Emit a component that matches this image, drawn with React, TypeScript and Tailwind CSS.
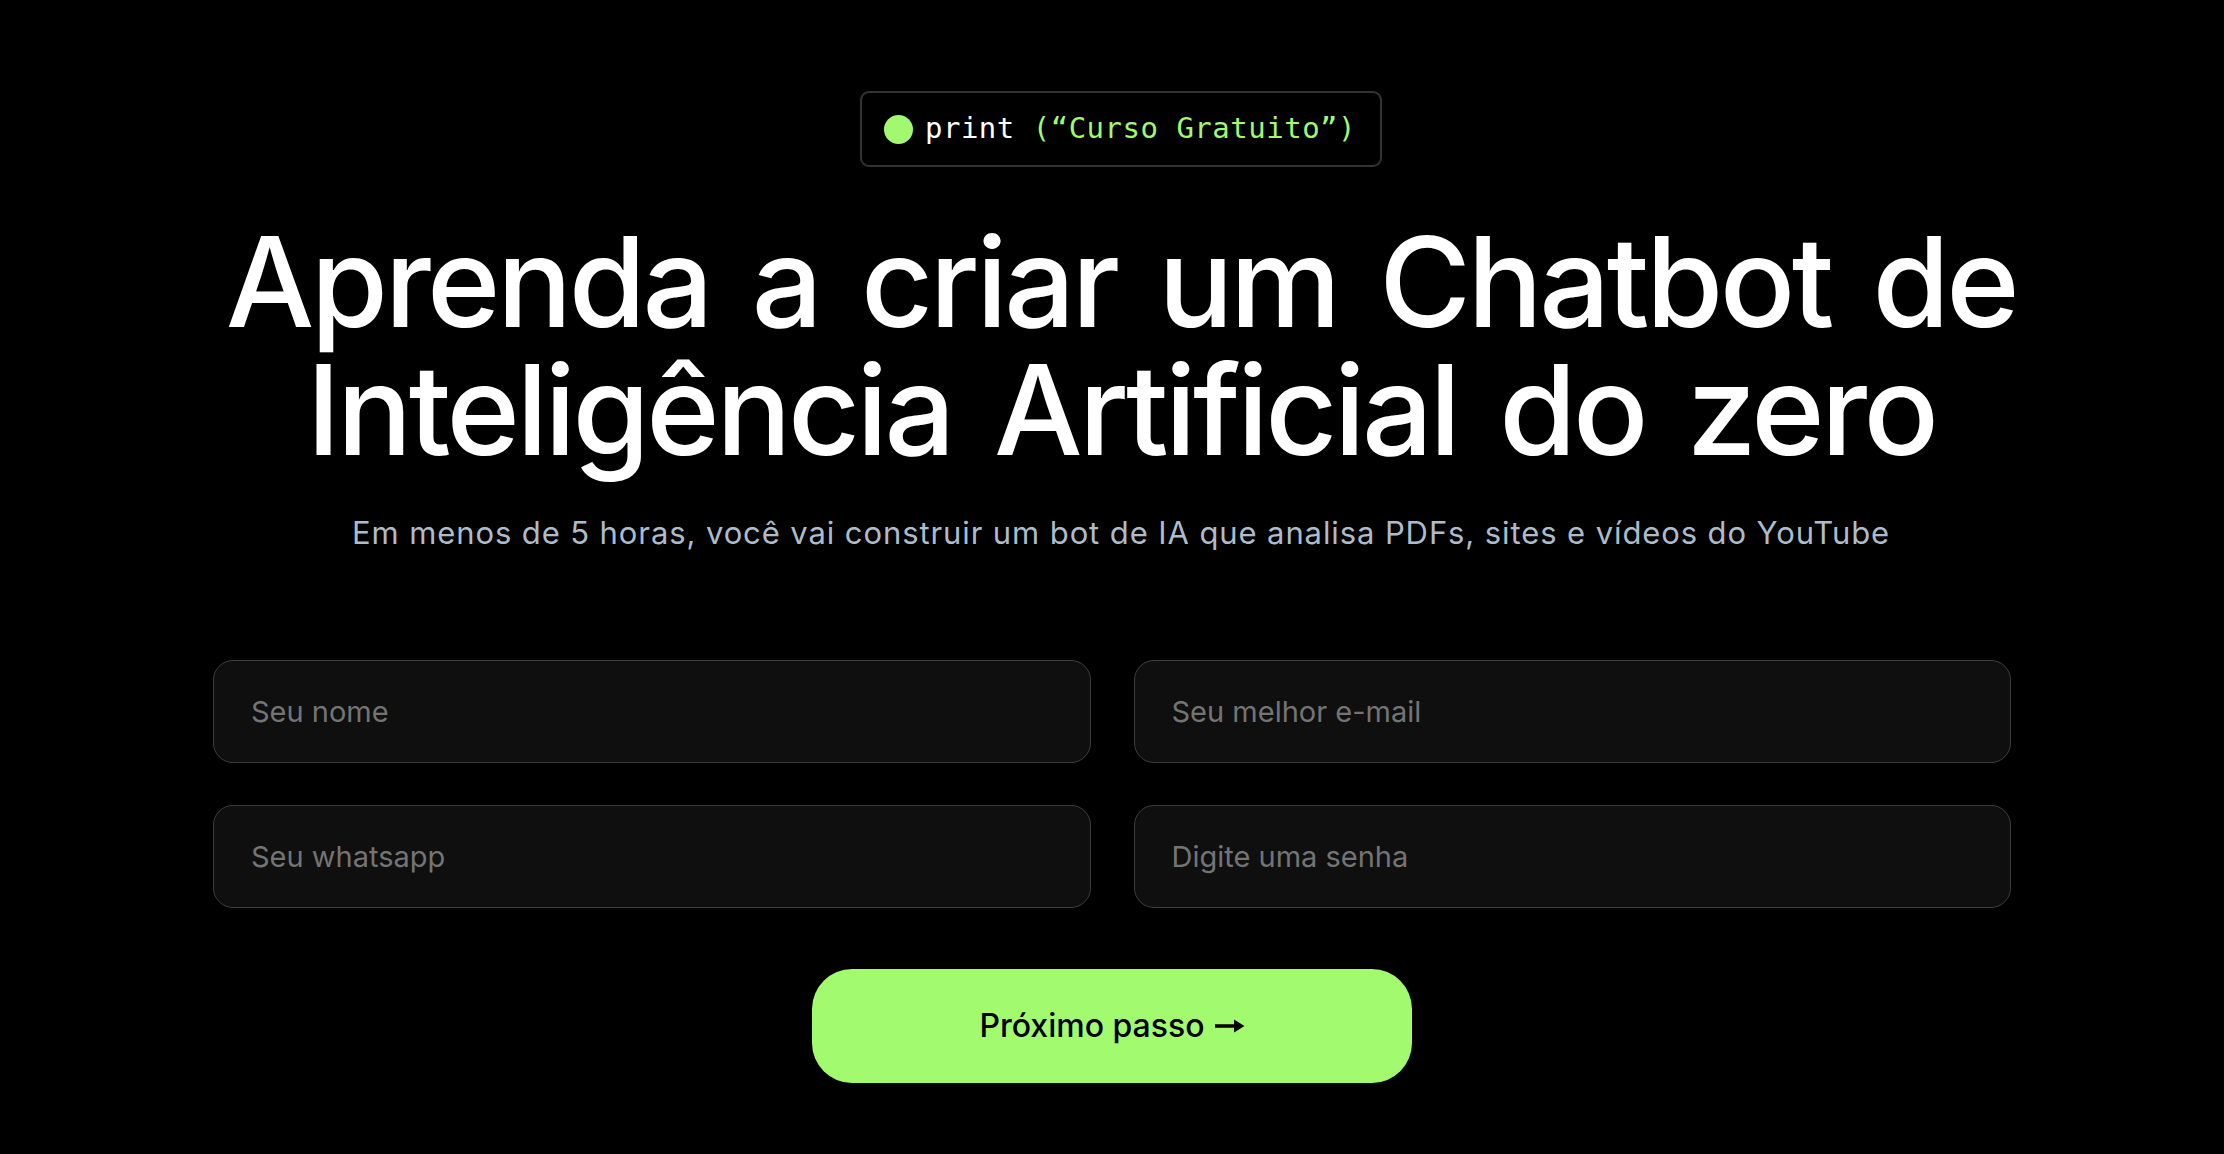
function Field({ placeholder, type = 'text' }: { placeholder: string; type?: string }) {
	return (
		<input
			type={type}
			placeholder={placeholder}
			className="h-[103px] w-full rounded-[20px] border border-[#3d3d3d] bg-[#0f0f0f] px-[37px] text-[29px] text-white placeholder:text-[#747474] outline-none"
		/>
	);
}

function Arrow() {
	return (
		<svg
			width="30"
			height="16"
			viewBox="0 0 30 16"
			fill="none">
			<path
				d="M0 8h21"
				stroke="black"
				strokeWidth="3.5"
			/>
			<path
				d="M19 1.5L29.5 8L19 14.5Z"
				fill="black"
			/>
		</svg>
	);
}

export default function App() {
	return (
		<main
			className="min-h-[1154px] w-full bg-black flex flex-col items-center pt-[91px]"
			style={{ fontFamily: 'Inter, "Noto Sans", sans-serif' }}>
			{/* <Hero> */}
			<div className="flex flex-col items-center pl-[18px]">
				{/* <Badge> */}
				<div className="flex h-[76px] items-center gap-[12px] rounded-[9px] border-2 border-[#333333] pl-[22px] pr-[24px]">
					<span className="h-[29px] w-[29px] rounded-full bg-[#a2f86f]"></span>
					<span
						className="text-[29px] tracking-[0.5px] whitespace-nowrap"
						style={{ fontFamily: '"DejaVu Sans Mono", "Liberation Mono", monospace' }}>
						<span className="text-white">print </span>
						<span className="text-[#a2f86f]">(“Curso Gratuito”)</span>
					</span>
				</div>
				{/* </Badge> */}

				{/* <Title> */}
				<h1 className="mt-[51px] text-center text-[125px] leading-[128px] font-medium tracking-[-0.028em] [word-spacing:12px] text-white whitespace-nowrap">
					Aprenda a criar um Chatbot de
					<br />
					Inteligência Artificial do zero
				</h1>
				<p className="mt-[41px] text-center text-[31px] leading-[36px] tracking-[0.9px] text-[#aebbc9] whitespace-nowrap">
					Em menos de 5 horas, você vai construir um bot de IA que analisa PDFs, sites e vídeos do YouTube
				</p>
				{/* </Title> */}
			</div>
			{/* </Hero> */}

			{/* <Form> */}
			<form className="mt-[109px] w-[1798px] flex flex-col items-center">
				<div className="grid w-full grid-cols-2 gap-x-[43px] gap-y-[42px]">
					<Field placeholder="Seu nome" />
					<Field placeholder="Seu melhor e-mail" type="email" />
					<Field placeholder="Seu whatsapp" />
					<Field placeholder="Digite uma senha" type="password" />
				</div>
				<button
					type="button"
					className="mt-[61px] flex h-[114px] w-[600px] items-center justify-center gap-[10px] rounded-[40px] bg-[#a2fa6f] text-[32px] font-medium text-black">
					Próximo passo
					<Arrow />
				</button>
			</form>
			{/* </Form> */}
		</main>
	);
}
